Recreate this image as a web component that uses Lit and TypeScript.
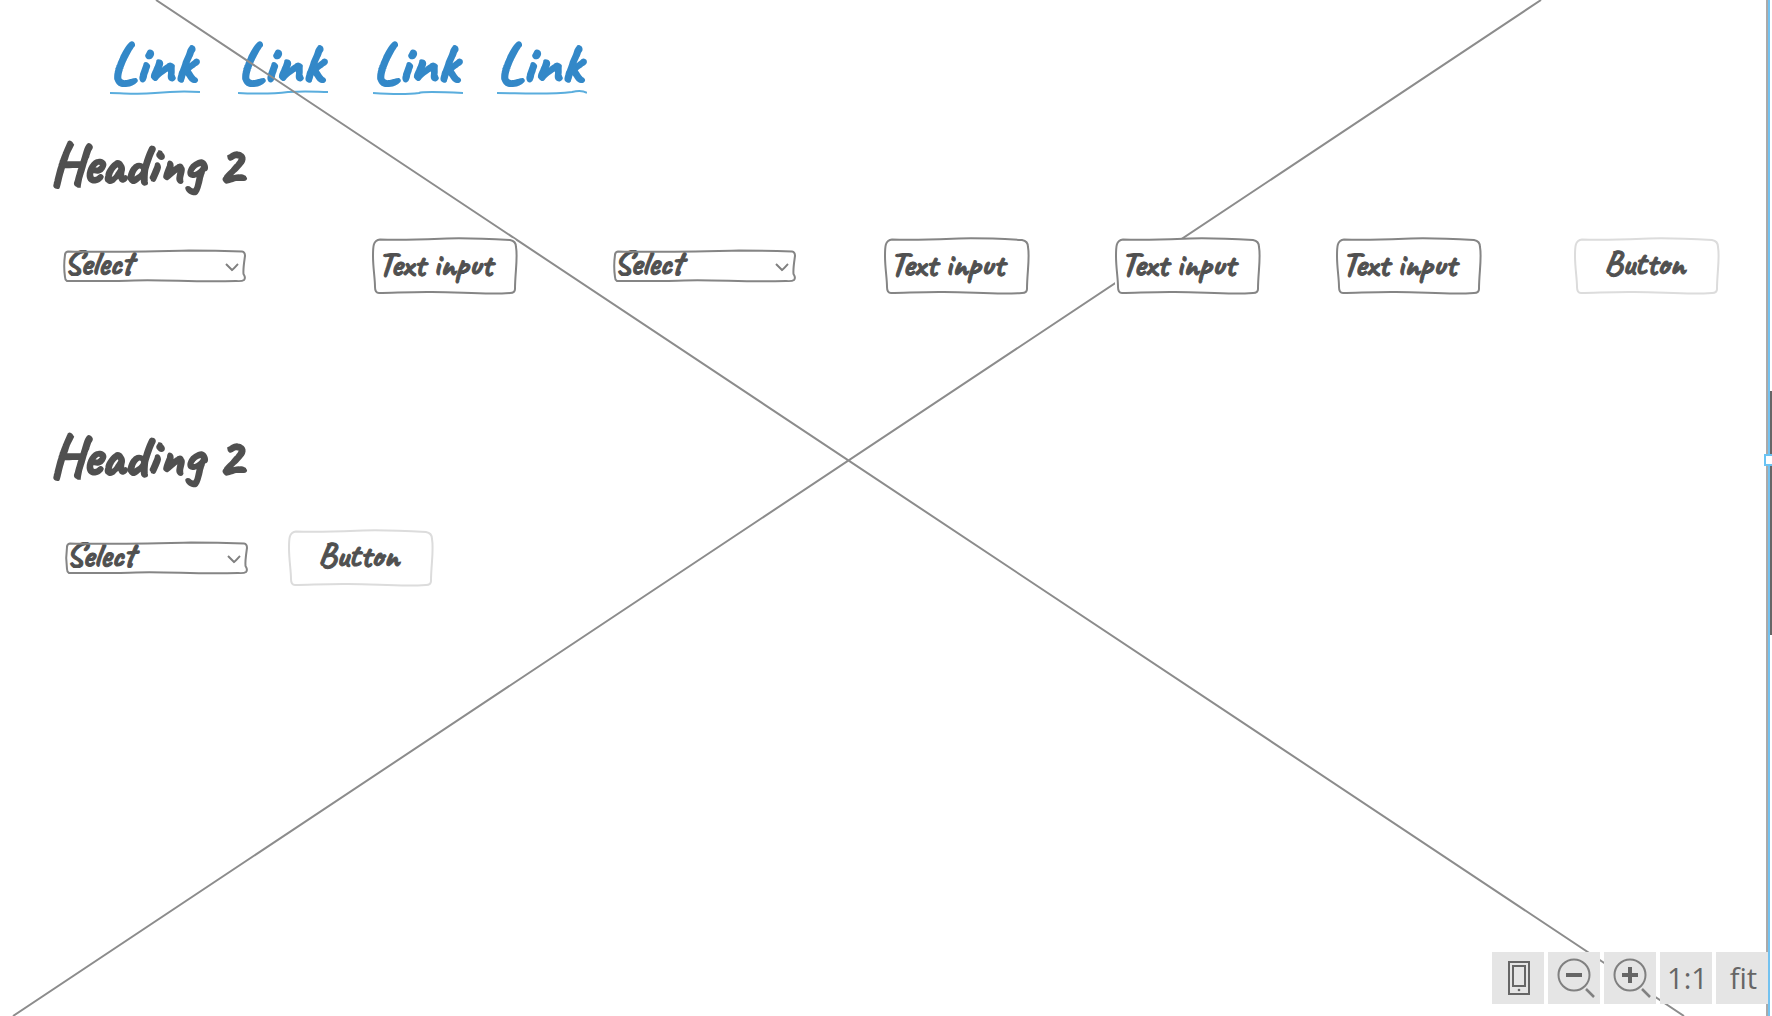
import {LitElement, html, svg, css} from "lit";
import {customElement, property} from "lit/decorators.js";

const hand = css`"Caveat", "Roboto Condensed", sans-serif`;

/** Hand-drawn outline stretched over the control in its slot. */
@customElement("sketch-frame")
class SketchFrame extends LitElement {
  @property() shape: "box" | "flat" = "box";
  @property({type: Boolean}) faint = false;

  static styles = css`
    :host {
      display: block;
      position: relative;
    }
    .outline {
      position: absolute;
      inset: 0;
      width: 100%;
      height: 100%;
      overflow: visible;
      pointer-events: none;
      fill: none;
      stroke: #858585;
      stroke-width: 2;
      stroke-linejoin: round;
    }
    .faint {
      stroke: #dcdcdc;
    }
    path {
      vector-effect: non-scaling-stroke;
    }
  `;

  render() {
    const flat = this.shape === "flat";
    const d = flat
      ? "M4 1.500C40 2.500 80 1.500 125 .5C150 .5 165 1 178 1.500Q181 2 181 6C180 13 179 19 179.500 24Q182 28 180 30Q178 31.500 172 31C130 32.500 105 29.500 70 30.500C50 31.500 20 31 3 31Q1 30 1 27C0 20 0 12 1 5Q1 2 4 1.500Z"
      : "M8 1.500C30 2.500 50 1.500 75 .5C95 0 120 1 138 2Q144 3 144 9C146 20 143 35 143 51Q143 55 138 55C110 57 85 53.500 55 54C35 54 20 55 7 55Q3 55 3 49C3 40 1 30 1 18C1 9 1 2 8 1.500Z";
    return html`
      <slot></slot>
      <svg class="outline ${this.faint ? "faint" : ""}" viewBox="0 0 ${flat ? "182 32" : "145 56"}"
        preserveAspectRatio="none" aria-hidden="true"><path d=${d}></path></svg>
    `;
  }
}

@customElement("app-root")
class AppRoot extends LitElement {
  static styles = css`
    :host {
      display: block;
      font-family: ${hand};
      font-weight: 700;
      color: #505050;
    }
    * {
      box-sizing: border-box;
    }
    .canvas {
      position: relative;
      min-height: 100vh;
      padding-top: 31px;
      overflow: hidden;
      background: #fff;
    }
    .cross {
      position: absolute;
      inset: 0;
      width: 100%;
      height: 100%;
      stroke: #8c8c8c;
      stroke-width: 2;
      pointer-events: none;
    }
    .links {
      display: grid;
      grid-template-columns: 128px 135px 124px 90px;
      padding-left: 110px;
      margin-bottom: 38px;
    }
    .link {
      position: relative;
      width: 90px;
      font-size: 58px;
      line-height: 64px;
      color: #3388c8;
      text-decoration: none;
      -webkit-text-stroke: 2px #3388c8;
    }
    .rule {
      position: absolute;
      left: 0;
      bottom: 0;
      width: 100%;
      height: 6px;
      fill: none;
      stroke: #5aaddd;
      stroke-width: 2;
    }
    h2 {
      margin: 0 0 41px;
      padding-left: 50px;
      font-size: 56px;
      line-height: 64px;
      -webkit-text-stroke: 2px #505050;
    }
    .row {
      display: grid;
      align-items: center;
      height: 56px;
      padding-left: 64px;
    }
    .wide {
      grid-template-columns: 308fr 242fr 270fr 231fr 221fr 238fr 198fr;
      margin-bottom: 131px;
    }
    .short {
      grid-template-columns: 222px 145px;
      padding-left: 66px;
    }
    .select {
      width: 182px;
    }
    .field {
      width: 145px;
    }
    select,
    input,
    .button {
      display: block;
      width: 100%;
      margin: 0;
      border: 0;
      border-radius: 6px;
      background: #fff;
      color: inherit;
      font: inherit;
      font-size: 34px;
      outline-offset: 2px;
      -webkit-text-stroke: 1px #505050;
    }
    select {
      appearance: none;
      height: 32px;
      padding: 0 0 6px;
      line-height: 26px;
    }
    input {
      height: 56px;
      padding: 0 4px 6px 6px;
    }
    .button {
      height: 56px;
      padding: 0 4px 8px 0;
      text-align: center;
    }
    .chevron {
      position: absolute;
      right: 7px;
      top: 12px;
      width: 14px;
      height: 10px;
      fill: none;
      stroke: #808080;
      stroke-width: 2;
      pointer-events: none;
    }
    .edge {
      position: absolute;
      top: 0;
      bottom: 0;
      right: 2px;
      width: 4px;
      border-left: 2px solid #aaa;
      background: #73c2f0;
    }
    .thumb {
      position: absolute;
      right: 0;
      top: 391px;
      width: 2px;
      height: 244px;
      background: #666;
    }
    .handle {
      position: absolute;
      right: -2px;
      top: 454px;
      width: 10px;
      height: 12px;
      border: 2px solid #6ac4f4;
      background: #fff;
    }
    .tools {
      position: absolute;
      right: 4px;
      bottom: 12px;
      display: flex;
      gap: 4px;
    }
    .tool {
      display: grid;
      place-items: center;
      width: 52px;
      height: 52px;
      padding: 0;
      border: 0;
      background: #e5e5e5;
      color: #666;
      font: 400 29px "Open Sans", "Noto Sans", sans-serif;
    }
    .label {
      padding: 0 0 2px 3px;
    }
    .icon {
      width: 52px;
      height: 52px;
      fill: none;
      stroke: #666;
    }
  `;

  private select() {
    return html`<sketch-frame class="select" shape="flat">
      <select aria-label="Select"><option>Select</option></select>
      <svg class="chevron" viewBox="0 0 14 10" aria-hidden="true"><path d="M1 2C3 4 5 6 7 8C9 7 11 4 13 2"></path></svg>
    </sketch-frame>`;
  }

  private field() {
    return html`<sketch-frame class="field"><input type="text" aria-label="Text input" value="Text input"></sketch-frame>`;
  }

  private button() {
    return html`<sketch-frame class="field" faint><button class="button" type="button">Button</button></sketch-frame>`;
  }

  private zoomIcon(plus: boolean) {
    return html`<svg class="icon" viewBox="0 0 52 52" aria-hidden="true">
      <circle cx="26" cy="23" r="15.500" stroke="#808080" stroke-width="2"></circle>
      <path d="M38 37L46 45" stroke="#808080" stroke-width="2.500"></path>
      <path d="M18 23H34" stroke-width="4"></path>
      ${plus ? svg`<path d="M26 15V31" stroke-width="4"></path>` : null}
    </svg>`;
  }

  render() {
    const rules = [
      "M0 4C15 4 25 6 45 4C65 2 75 2 90 3",
      "M0 4C20 5 35 5 50 3C70 2 80 3 90 3",
      "M0 4C15 5 30 6 46 4C50 2 70 3 90 4",
      "M0 4C20 4 50 6 75 3C83 1 87 2 90 4",
    ];
    return html`<main class="canvas">
      <nav class="links" aria-label="Links">
        ${rules.map((d) => html`<a class="link" href="#">Link<svg class="rule" viewBox="0 0 90 6" aria-hidden="true"><path d=${d}></path></svg></a>`)}
      </nav>
      <svg class="cross" viewBox="0 0 1772 1016" preserveAspectRatio="none" aria-hidden="true">
        <path d="M156 0L1684 1016M1541 0L13 1016"></path>
      </svg>
      <h2>Heading 2</h2>
      <div class="row wide">
        ${this.select()}${this.field()}${this.select()}${this.field()}${this.field()}${this.field()}${this.button()}
      </div>
      <h2>Heading 2</h2>
      <div class="row short">${this.select()}${this.button()}</div>
      <div class="edge"></div>
      <div class="thumb"></div>
      <div class="handle"></div>
      <div class="tools">
        <button class="tool" type="button" aria-label="Device">
          <svg class="icon" viewBox="0 0 52 52" aria-hidden="true">
            <rect x="17" y="10" width="20" height="32" stroke-width="2"></rect>
            <rect x="21" y="14" width="12" height="20" stroke-width="2"></rect>
            <circle cx="27" cy="38" r="1.300" fill="#666" stroke="none"></circle>
          </svg>
        </button>
        <button class="tool" type="button" aria-label="Zoom out">${this.zoomIcon(false)}</button>
        <button class="tool" type="button" aria-label="Zoom in">${this.zoomIcon(true)}</button>
        <button class="tool label" type="button">1:1</button>
        <button class="tool label" type="button">fit</button>
      </div>
    </main>`;
  }
}
